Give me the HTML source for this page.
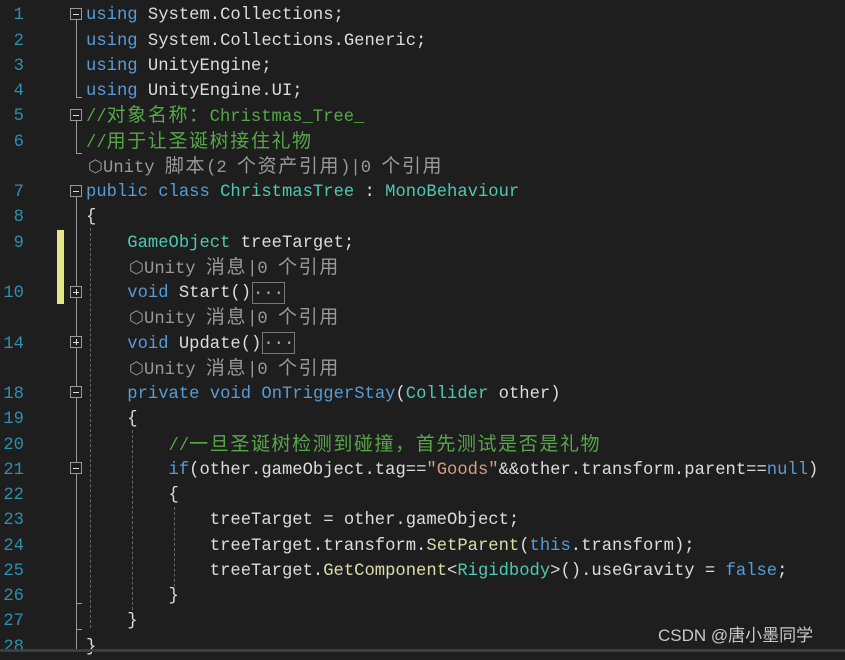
<!DOCTYPE html>
<html><head><meta charset="utf-8"><style>
html,body{margin:0;padding:0;background:#1e1e1e;width:845px;height:652px;overflow:hidden}
.r{position:absolute;left:0;height:25.25px;line-height:25.25px;white-space:pre;font-family:"Liberation Mono","Noto Sans CJK SC",monospace;font-size:17.2px;color:#dcdcdc}
.n{position:absolute;width:24px;text-align:right;left:0;color:#2b91af}
.t{position:absolute;left:86px}
.c{letter-spacing:1.6px;font-size:19px}
.k{color:#569cd6}.ty{color:#4ec9b0}.cm{color:#57a64a}.s{color:#d69d85}.l{color:#999}.m{color:#dcdcaa}
.fb{position:absolute;left:70px;width:10px;height:10px;border:1px solid #999;background:#1e1e1e}
.fb:before{content:"";position:absolute;left:2px;top:4.5px;width:6px;height:1px;background:#ddd}
.fb.p:after{content:"";position:absolute;left:4.5px;top:2px;width:1px;height:6px;background:#ddd}
.vl{position:absolute;left:76px;width:1px;background:#999}
.dg{position:absolute;width:0;border-left:1px dashed #666}
.box{display:inline-block;border:1px solid #777;height:20px;line-height:16px;vertical-align:middle;color:#aaa;margin-left:1px}
</style></head><body>
<div class="vl" style="top:20px;height:77px"></div>
<div class="vl" style="top:97px;height:1px;width:6px"></div>
<div class="vl" style="top:121px;height:32px"></div>
<div class="vl" style="top:153px;height:1px;width:6px"></div>
<div class="vl" style="top:197px;height:455px"></div>
<div class="vl" style="top:603px;height:1px;width:6px"></div>
<div class="vl" style="top:629px;height:1px;width:6px"></div>
<div class="dg" style="left:90px;top:228px;height:400px"></div>
<div class="dg" style="left:132px;top:430px;height:180px"></div>
<div class="dg" style="left:174px;top:507px;height:80px"></div>
<div style="position:absolute;left:57px;top:230px;width:7px;height:74px;background:#e5e58a"></div>

<div class="r" style="top:3.4px"><span class="n">1</span><span class="t"><span class="k">using</span> System.Collections;</span></div>
<div class="r" style="top:28.6px"><span class="n">2</span><span class="t"><span class="k">using</span> System.Collections.Generic;</span></div>
<div class="r" style="top:53.9px"><span class="n">3</span><span class="t"><span class="k">using</span> UnityEngine;</span></div>
<div class="r" style="top:79.1px"><span class="n">4</span><span class="t"><span class="k">using</span> UnityEngine.UI;</span></div>
<div class="r" style="top:104.4px"><span class="n">5</span><span class="t cm">//<span class="c">对象名称：</span>Christmas_Tree_</span></div>
<div class="r" style="top:129.6px"><span class="n">6</span><span class="t cm">//<span class="c">用于让圣诞树接住礼物</span></span></div>
<div class="r" style="top:154.9px"><span class="t l" style="left:88px">⬡Unity <span class="c">脚本</span>(2 <span class="c">个资产引用</span>)|0 <span class="c">个引用</span></span></div>
<div class="r" style="top:180.1px"><span class="n">7</span><span class="t"><span class="k">public class</span> <span class="ty">ChristmasTree</span> : <span class="ty">MonoBehaviour</span></span></div>
<div class="r" style="top:205.4px"><span class="n">8</span><span class="t">{</span></div>
<div class="r" style="top:230.6px"><span class="n">9</span><span class="t">    <span class="ty">GameObject</span> treeTarget;</span></div>
<div class="r" style="top:255.9px"><span class="t l" style="left:129px">⬡Unity <span class="c">消息</span>|0 <span class="c">个引用</span></span></div>
<div class="r" style="top:281.1px"><span class="n">10</span><span class="t">    <span class="k">void</span> Start()<span class="box">...</span></span></div>
<div class="r" style="top:306.4px"><span class="t l" style="left:129px">⬡Unity <span class="c">消息</span>|0 <span class="c">个引用</span></span></div>
<div class="r" style="top:331.6px"><span class="n">14</span><span class="t">    <span class="k">void</span> Update()<span class="box">...</span></span></div>
<div class="r" style="top:356.9px"><span class="t l" style="left:129px">⬡Unity <span class="c">消息</span>|0 <span class="c">个引用</span></span></div>
<div class="r" style="top:382.1px"><span class="n">18</span><span class="t">    <span class="k">private void</span> <span class="k">OnTriggerStay</span>(<span class="ty">Collider</span> other)</span></div>
<div class="r" style="top:407.4px"><span class="n">19</span><span class="t">    {</span></div>
<div class="r" style="top:432.6px"><span class="n">20</span><span class="t">        <span class="cm">//<span class="c">一旦圣诞树检测到碰撞，首先测试是否是礼物</span></span></span></div>
<div class="r" style="top:457.9px"><span class="n">21</span><span class="t">        <span class="k">if</span>(other.gameObject.tag==<span class="s">"Goods"</span>&amp;&amp;other.transform.parent==<span class="k">null</span>)</span></div>
<div class="r" style="top:483.1px"><span class="n">22</span><span class="t">        {</span></div>
<div class="r" style="top:508.4px"><span class="n">23</span><span class="t">            treeTarget = other.gameObject;</span></div>
<div class="r" style="top:533.6px"><span class="n">24</span><span class="t">            treeTarget.transform.<span class="m">SetParent</span>(<span class="k">this</span>.transform);</span></div>
<div class="r" style="top:558.9px"><span class="n">25</span><span class="t">            treeTarget.<span class="m">GetComponent</span>&lt;<span class="ty">Rigidbody</span>&gt;().useGravity = <span class="k">false</span>;</span></div>
<div class="r" style="top:584.1px"><span class="n">26</span><span class="t">        }</span></div>
<div class="r" style="top:609.4px"><span class="n">27</span><span class="t">    }</span></div>
<div class="r" style="top:634.6px"><span class="n">28</span><span class="t">}</span></div>

<div class="fb" style="top:8px"></div>
<div class="fb" style="top:109px"></div>
<div class="fb" style="top:185px"></div>
<div class="fb p" style="top:286px"></div>
<div class="fb p" style="top:336px"></div>
<div class="fb" style="top:386px"></div>
<div class="fb" style="top:462px"></div>

<div style="position:absolute;left:658px;top:621px;font-family:'Liberation Sans','Noto Sans CJK SC',sans-serif;font-size:17px;color:#c8c8c8">CSDN @唐小墨同学</div>
<div style="position:absolute;left:0;top:649px;width:845px;height:3px;background:#3e3e42"></div>
</body></html>
